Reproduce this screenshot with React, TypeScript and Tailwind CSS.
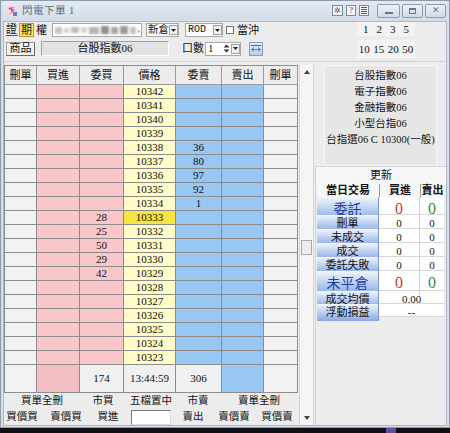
import React from "react";

const PRICES = Array.from({ length: 20 }, (_, i) => 10342 - i);
const ASK: Record<number, number> = { 10338: 36, 10337: 80, 10336: 97, 10335: 92, 10334: 1 };
const BID: Record<number, number> = { 10333: 28, 10332: 25, 10331: 50, 10330: 29, 10329: 42 };
const LAST = 10333;

const COLS = "grid grid-cols-[32px_43px_44px_52px_46px_42px_34px]";
const CELL = "border-r border-b border-[#8c8c8c]";

function TitleBar() {
  return (
    <div className="h-[20px] flex items-center bg-linear-to-b from-[#e4eaf2] to-[#d3dce8]">
      {/* app icon */}
      <svg width="12" height="12" viewBox="0 0 12 12" className="ml-[3px]">
        <rect x="1" y="1" width="10" height="10" fill="#f4d6e4" />
        <path d="M2 3 L6 6 L3 10 L9 5 L6 4 L8 2 Z" fill="#d04a8a" />
        <rect x="7" y="7" width="4" height="4" fill="#5a7fc8" />
      </svg>
      <span className="ml-[4px] text-[10.5px] text-[#5d6b7e] tracking-[0.5px]">閃電下單 1</span>
      <div className="ml-auto flex items-center gap-[3px]">
        <div className="w-[11px] h-[11px] border border-[#7f8a98] bg-[#f4f6f9] flex items-center justify-center text-[8px] leading-none text-[#556]">✲</div>
        <div className="w-[10px] h-[11px] border border-[#7f8a98] bg-[#f4f6f9] flex items-center justify-center text-[9px] leading-none text-[#445]">?</div>
        <div className="w-[10px] h-[11px] border border-[#7f8a98] bg-[#f4f6f9] flex flex-col justify-center gap-[1px] px-[1px]">
          <span className="h-[1px] bg-[#556]" />
          <span className="h-[1px] bg-[#556]" />
          <span className="h-[1px] bg-[#556]" />
          <span className="h-[1px] bg-[#556]" />
        </div>
      </div>
      <div className="ml-[8px] mr-[1px] flex items-center gap-[2px]">
        <div className="w-[23px] h-[14px] rounded-[2px] border border-[#8d9bb0] bg-linear-to-b from-[#eef2f7] to-[#cfd9e6] flex items-end justify-center pb-[3px]">
          <span className="w-[8px] h-[2px] border border-[#6c7685]" />
        </div>
        <div className="w-[21px] h-[14px] rounded-[2px] border border-[#8d9bb0] bg-linear-to-b from-[#eef2f7] to-[#cfd9e6] flex items-center justify-center">
          <span className="w-[7px] h-[6px] border border-[#6c7685] border-t-2" />
        </div>
        <div className="w-[21px] h-[14px] rounded-[2px] border border-[#8d9bb0] bg-linear-to-b from-[#eef2f7] to-[#cfd9e6] flex items-center justify-center text-[9px] leading-none text-[#6c7685]">
          ✕
        </div>
      </div>
    </div>
  );
}

function DropArrow() {
  return (
    <div className="flex-none w-[9px] h-[10px] border border-[#a0a0a0] bg-[#f2f2f2] flex items-center justify-center">
      <svg width="5" height="3" viewBox="0 0 5 3">
        <path d="M0 0 H5 L2.5 3 Z" fill="#222" />
      </svg>
    </div>
  );
}

function TopControls() {
  return (
    <div className="h-[39px] flex whitespace-nowrap">
      <div className="flex flex-col">
        {/* row 1 */}
        <div className="mt-[1px] h-[14px] flex items-center text-[11px] leading-none">
          <span className="ml-[2px] w-[12px] border-b border-[#3a5fb0]">證</span>
          <span className="ml-[1px] w-[15px] h-[14px] flex items-center justify-center bg-[#ffe966] border border-[#b89a20]">期</span>
          <span className="ml-[2px] w-[12px]">權</span>
          <div className="ml-[4px] w-[90px] h-[14px] bg-white border border-[#a8a8a8] overflow-hidden flex items-center">
            <div className="flex items-center gap-[2px] pl-[2px] blur-[1.2px]">
              <span className="w-[7px] h-[7px] bg-[#c4c4c4]" />
              <span className="w-[5px] h-[5px] bg-[#d2d2d2]" />
              <span className="w-[8px] h-[6px] bg-[#bdbdbd]" />
              <span className="w-[6px] h-[6px] bg-[#d6d6d6]" />
              <span className="w-[10px] h-[7px] bg-[#b4b4b4]" />
              <span className="w-[8px] h-[8px] bg-[#8e8e8e]" />
              <span className="w-[7px] h-[7px] bg-[#a6a6a6]" />
              <span className="w-[8px] h-[8px] bg-[#9a9a9a]" />
              <span className="w-[6px] h-[7px] bg-[#c0c0c0]" />
            </div>
            <span className="ml-auto mr-[1px] text-[9px] text-[#555]">›</span>
          </div>
          <div className="ml-[4px] w-[33px] h-[14px] bg-white border border-[#a8a8a8] flex items-center pl-[1px] text-[10.5px]">
            <span>新倉</span>
            <span className="ml-auto"><DropArrow /></span>
          </div>
          <div className="ml-[6px] w-[38px] h-[14px] bg-white border border-[#a8a8a8] flex items-center pl-[2px] font-['Liberation_Mono',monospace] text-[10px]">
            <span>ROD</span>
            <span className="ml-auto"><DropArrow /></span>
          </div>
          <span className="ml-[3px] w-[8px] h-[8px] bg-white border border-[#707070]" />
          <span className="ml-[3px]">當沖</span>
        </div>
        {/* row 2 */}
        <div className="mt-[4px] h-[15px] flex items-center text-[11px] leading-none">
          <div className="ml-[2px] w-[29px] h-[14px] flex items-center justify-center bg-[#f4f4f4] border border-[#9a9a9a] border-b-[#6a6a6a] border-r-[#6a6a6a]">商品</div>
          <div className="ml-[6px] w-[128px] h-[15px] flex items-center justify-center bg-[#e2e2e2] border border-[#a0a0a0] border-b-white border-r-white">
            台股指數06
          </div>
          <span className="ml-[13px]">口數</span>
          <div className="ml-[1px] w-[36px] h-[14px] bg-white border border-[#a8a8a8] flex items-center pl-[2px]">
            <span>1</span>
            <svg width="7" height="9" viewBox="0 0 7 9" className="ml-auto">
              <path d="M0.5 3.5 L3.5 0.5 L6.5 3.5 Z" fill="#333" />
              <path d="M0.5 5.5 L3.5 8.5 L6.5 5.5 Z" fill="#333" />
            </svg>
            <span className="ml-[1px]"><DropArrow /></span>
          </div>
          <div className="ml-[8px] w-[14px] h-[14px] border border-[#7c9cc8] bg-linear-to-b from-[#e8f0fb] to-[#b8cdea] flex flex-col items-center justify-center">
            <span className="w-[10px] h-[1px] bg-[#3b64a8]" />
            <svg width="10" height="5" viewBox="0 0 10 5" className="mt-[1px]">
              <path d="M0.5 2.5 L3 0.5 M0.5 2.5 L3 4.5 M0.5 2.5 H9.5 M9.5 2.5 L7 0.5 M9.5 2.5 L7 4.5" stroke="#3b64a8" strokeWidth="0.8" fill="none" />
            </svg>
          </div>
        </div>
      </div>
      {/* quick qty */}
      <div className="ml-[94px] flex flex-col text-[11px] leading-none">
        <div className="h-[14px] w-[58px] bg-[#f3f3f3] flex items-center justify-around px-[2px]">
          <span>1</span><span>2</span><span>3</span><span>5</span>
        </div>
        <div className="mt-[4px] h-[18px] w-[58px] bg-[#f3f3f3] flex items-center justify-around">
          <span>10</span><span>15</span><span>20</span><span>50</span>
        </div>
      </div>
    </div>
  );
}

function BookRow({ price }: { price: number }) {
  const bid = BID[price];
  const ask = ASK[price];
  return (
    <div className={`${COLS} h-[14px] text-[11px] leading-[13px] text-center`}>
      <div className={`bg-[#f2f2f2] ${CELL}`} />
      <div className={`bg-[#f9c6ca] ${CELL}`} />
      <div className={`bg-[#f9c6ca] ${CELL}`}>{bid ?? ""}</div>
      <div className={`${price === LAST ? "bg-[#f7e43e]" : "bg-[#fffcc8]"} ${CELL}`}>{price}</div>
      <div className={`bg-[#98c7f4] ${CELL}`}>{ask ?? ""}</div>
      <div className={`bg-[#98c7f4] ${CELL}`} />
      <div className={`bg-[#f2f2f2] ${CELL}`} />
    </div>
  );
}

function OrderBook() {
  const heads = ["刪單", "買進", "委買", "價格", "委賣", "賣出", "刪單"];
  return (
    <div className="border-l border-t border-[#8c8c8c]">
      <div className={`${COLS} h-[19px] text-[11px] bg-[#ececec]`}>
        {heads.map((h, i) => (
          <div key={i} className="flex items-center justify-center border-r border-b border-[#9a9a9a]">
            {h}
          </div>
        ))}
      </div>
      {PRICES.map((p) => (
        <BookRow key={p} price={p} />
      ))}
      <div className={`${COLS} h-[28px] text-[11px]`}>
        <div className={`bg-[#f2f2f2] ${CELL}`} />
        <div className={`bg-[#f2bfc3] ${CELL}`} />
        <div className={`bg-[#f0f0f0] ${CELL} flex items-center justify-center`}>174</div>
        <div className={`bg-[#f0f0f0] ${CELL} flex items-center justify-center`}>13:44:59</div>
        <div className={`bg-[#f0f0f0] ${CELL} flex items-center justify-center`}>306</div>
        <div className={`bg-[#98c7f4] ${CELL}`} />
        <div className={`bg-[#f2f2f2] ${CELL}`} />
      </div>
    </div>
  );
}

function BottomButtons() {
  return (
    <div className="text-[10.5px] leading-none whitespace-nowrap">
      <div className="h-[16px] flex items-center">
        <span className="flex-none w-[76px] text-center">買單全刪</span>
        <span className="flex-none w-[46px] text-center">市買</span>
        <span className="flex-none w-[50px] text-center">五檔置中</span>
        <span className="flex-none w-[44px] text-center">市賣</span>
        <span className="flex-none w-[78px] text-center">賣單全刪</span>
      </div>
      <div className="h-[16px] flex items-center">
        <span className="flex-none ml-[2px] w-[32px] text-center">買價買</span>
        <span className="flex-none ml-[12px] w-[32px] text-center">賣價買</span>
        <span className="flex-none ml-[15px] w-[22px] text-center">買進</span>
        <span className="flex-none ml-[12px] w-[40px] h-[15px] bg-white border border-[#7a7a7a] border-b-[#dcdcdc] border-r-[#dcdcdc]" />
        <span className="flex-none ml-[11px] w-[22px] text-center">賣出</span>
        <span className="flex-none ml-[14px] w-[32px] text-center">賣價賣</span>
        <span className="flex-none ml-[11px] w-[32px] text-center">買價賣</span>
      </div>
    </div>
  );
}

function ScrollBar() {
  return (
    <div className="w-[15px] ml-[1px] flex flex-col bg-[#f4f4f4] border-l border-r border-[#d6d6d6]">
      <div className="h-[14px] flex items-center justify-center">
        <svg width="6" height="4" viewBox="0 0 6 4"><path d="M0 4 L3 0 L6 4 Z" fill="#444" /></svg>
      </div>
      <div className="flex-1">
        <div className="mt-[161px] mx-[1px] h-[15px] bg-[#ececec] border border-[#a9a9a9]" />
      </div>
      <div className="h-[14px] flex items-center justify-center">
        <svg width="6" height="4" viewBox="0 0 6 4"><path d="M0 0 L3 4 L6 0 Z" fill="#444" /></svg>
      </div>
    </div>
  );
}

type StatRow = { label: string; big?: boolean; buy: string; sell: string; h: string; span?: boolean };

const STATS: StatRow[] = [
  { label: "委託", big: true, buy: "0", sell: "0", h: "h-[18px]" },
  { label: "刪單", buy: "0", sell: "0", h: "h-[14px]" },
  { label: "未成交", buy: "0", sell: "0", h: "h-[14px]" },
  { label: "成交", buy: "0", sell: "0", h: "h-[14px]" },
  { label: "委託失敗", buy: "0", sell: "0", h: "h-[14px]" },
  { label: "未平倉", big: true, buy: "0", sell: "0", h: "h-[20px]" },
  { label: "成交均價", buy: "0.00", sell: "", h: "h-[13px]", span: true },
  { label: "浮動損益", buy: "--", sell: "", h: "h-[13px]", span: true },
];

function RightPanel() {
  const indices = ["台股指數06", "電子指數06", "金融指數06", "小型台指06", "台指選06 C 10300(一般)"];
  return (
    <div className="flex-1 ml-[1px] flex flex-col">
      <div className="mx-[9px] h-[101px] bg-[#e6e6e6] border border-[#f6f6f6] flex flex-col items-center pt-[2px] text-[10.5px] leading-[16px] whitespace-nowrap">
        {indices.map((t) => (
          <span key={t}>{t}</span>
        ))}
      </div>
      <div className="flex-1 border-l border-t border-[#d4d4d4] flex flex-col">
        <div className="h-[17px] bg-[#f6f6f6] flex items-center justify-center text-[11px]">更新</div>
        <div className="ml-[1px] mr-[2px] bg-white text-[11px] whitespace-nowrap">
          <div className="grid grid-cols-[62px_41px_1fr] h-[13px] leading-[13px] bg-[#f6f6f6] font-bold">
            <span className="text-center">當日交易</span>
            <span className="text-center border-l border-[#9a9a9a]">買進</span>
            <span className="text-center border-l border-[#9a9a9a]">賣出</span>
          </div>
          {STATS.map((r) => (
            <div key={r.label} className={`grid grid-cols-[62px_41px_1fr] ${r.h} border-b border-[#d8d8d8]`}>
              <div
                className={`flex items-center justify-center bg-linear-to-b from-[#f1f5fc] to-[#88a9e3] border-r border-[#7d97c7] ${
                  r.big ? "text-[14px] text-[#1f3fa0]" : "text-[11px] text-[#111]"
                }`}
              >
                {r.label}
              </div>
              {r.span ? (
                <div className="col-span-2 flex items-center justify-center text-[11px]">{r.buy}</div>
              ) : (
                <>
                  <div
                    className={`flex items-center justify-center border-r border-[#d0d0d0] ${
                      r.big ? "text-[16px] font-light text-[#c23a3a]" : ""
                    }`}
                  >
                    {r.buy}
                  </div>
                  <div className={`flex items-center justify-center ${r.big ? "text-[16px] font-light text-[#3a8a3a]" : ""}`}>
                    {r.sell}
                  </div>
                </>
              )}
            </div>
          ))}
        </div>
      </div>
    </div>
  );
}

export default function App() {
  return (
    <div className="w-[450px] h-[433px] bg-[#101014] font-['Liberation_Serif','Noto_Sans_CJK_TC',serif] text-[#111] flex flex-col">
      <div className="h-[428px] flex flex-col bg-[#d6dee9] border border-[#8f9baa] px-[2px] pb-[1px]">
        <TitleBar />
        <div className="mt-[1px] flex-1 bg-[#ececec] border border-[#aeb8c5] flex flex-col">
          <TopControls />
          <div className="h-[4px] border-t border-[#d2d2d2]" />
          <div className="flex-1 flex">
            <div className="w-[294px] flex flex-col">
              <OrderBook />
              <BottomButtons />
            </div>
            <ScrollBar />
            <RightPanel />
          </div>
        </div>
      </div>
      <div className="flex-1 flex items-center">
        <span className="ml-[386px] w-[10px] h-[5px] bg-[#6a4aa0]" />
      </div>
    </div>
  );
}
